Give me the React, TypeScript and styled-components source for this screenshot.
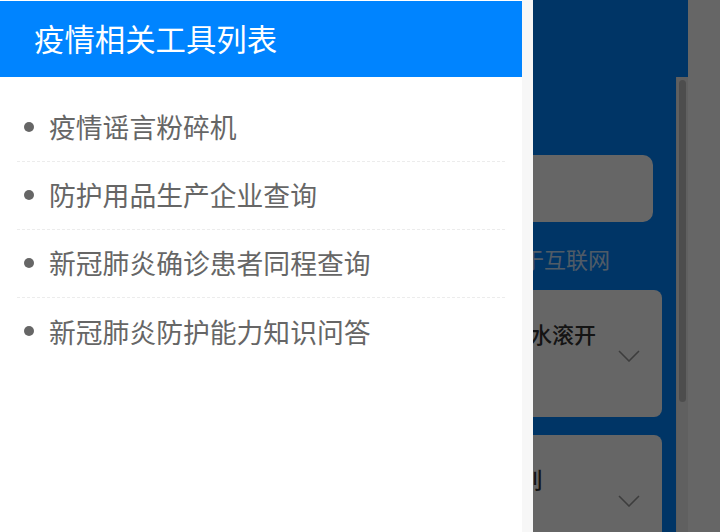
import React from 'react';
import styled, { createGlobalStyle } from 'styled-components';

const GlobalStyle = createGlobalStyle`
  html, body {
    margin: 0;
    padding: 0;
    width: 720px;
    height: 532px;
    overflow: hidden;
    background: #ffffff;
    font-family: "Noto Sans CJK SC", "Noto Sans", sans-serif;
  }
`;

const Page = styled.div`
  display: flex;
  width: 720px;
  height: 532px;
  background: #ffffff;
`;

const Main = styled.div`
  display: flex;
  flex-direction: column;
  width: 688px;
  height: 100%;
  background: #0084ff;
`;

const TopBar = styled.div`
  height: 77px;
  flex-shrink: 0;
`;

const Body = styled.div`
  display: flex;
  flex: 1;
  overflow: hidden;
`;

const Content = styled.div`
  flex: 1;
  padding: 78px 14px 0 14px;
`;

const SearchBox = styled.div`
  height: 67px;
  margin-right: 9px;
  border-radius: 10px;
  background: #ffffff;
`;

const Source = styled.div`
  margin-top: 21px;
  padding-right: 52px;
  font-size: 22px;
  line-height: 30px;
  text-align: right;
  color: rgba(255, 255, 255, 0.8);
`;

const Cards = styled.div`
  display: flex;
  flex-direction: column;
  gap: 18px;
  margin-top: 17px;
`;

const Card = styled.div`
  display: flex;
  flex-direction: column;
  height: 127px;
  box-sizing: border-box;
  padding: 30px 22px 0 32px;
  border-radius: 8px;
  background: #ffffff;
  flex-shrink: 0;
`;

const CardTitle = styled.div`
  font-size: 22px;
  font-weight: 500;
  line-height: 26px;
  color: #333333;
  white-space: nowrap;
`;

const CardFoot = styled.div`
  display: flex;
  justify-content: flex-end;
  margin-top: 4px;
  color: #999999;
`;

const ScrollTrack = styled.div`
  width: 12px;
  flex-shrink: 0;
  box-sizing: border-box;
  padding: 3px 2px 0 2px;
  background: #f1f1f1;
  border-left: 1px solid #e8e8e8;
`;

const ScrollThumb = styled.div`
  height: 322px;
  border-radius: 4px;
  background: #c1c1c1;
`;

const Overlay = styled.div`
  position: fixed;
  inset: 0;
  background: rgba(0, 0, 0, 0.6);
`;

const Drawer = styled.aside`
  position: fixed;
  top: 0;
  left: 0;
  bottom: 0;
  width: 522px;
  padding-top: 1px;
  background: #ffffff;
  border-right: 11px solid #f7f7f7;
`;

const DrawerHeader = styled.div`
  display: flex;
  align-items: center;
  height: 76px;
  box-sizing: border-box;
  padding: 0 0 3px 34px;
  background: #0084ff;
  color: #ffffff;
  font-size: 30.4px;
`;

const ToolList = styled.ul`
  list-style: none;
  margin: 0;
  padding: 17px 17px 0 17px;
`;

const ToolItem = styled.li`
  display: flex;
  align-items: center;
  height: 68px;
  box-sizing: border-box;
  padding-bottom: 2px;
  border-bottom: 1px dashed #ececec;
  color: #666666;
  font-size: 26.8px;

  &:last-child {
    border-bottom: none;
  }
`;

const Dot = styled.span`
  width: 10px;
  height: 10px;
  margin: 0 15px 0 7px;
  border-radius: 50%;
  background: #666666;
  flex-shrink: 0;
`;

const Chevron = () => (
  <svg width="22" height="12" viewBox="0 0 22 12" fill="none">
    <path d="M1 1l10 10L21 1" stroke="currentColor" strokeWidth="1.6" />
  </svg>
);

const cards = [
  '新冠病毒不耐高温，喝热水能预防吗？那只需要把水滚开',
  '喝白酒能杀死病毒吗？教你1招轻松分辨真假的区别',
];

const tools = [
  '疫情谣言粉碎机',
  '防护用品生产企业查询',
  '新冠肺炎确诊患者同程查询',
  '新冠肺炎防护能力知识问答',
];

export default function App() {
  return (
    <>
      <GlobalStyle />
      <Page>
        <Main>
          <TopBar />
          <Body>
            <Content>
              <SearchBox />
              <Source>以上信息均来源于互联网</Source>
              <Cards>
                {cards.map((title) => (
                  <Card key={title}>
                    <CardTitle>{title}</CardTitle>
                    <CardFoot>
                      <Chevron />
                    </CardFoot>
                  </Card>
                ))}
              </Cards>
            </Content>
            <ScrollTrack>
              <ScrollThumb />
            </ScrollTrack>
          </Body>
        </Main>
      </Page>
      <Overlay />
      <Drawer>
        <DrawerHeader>疫情相关工具列表</DrawerHeader>
        <ToolList>
          {tools.map((t) => (
            <ToolItem key={t}>
              <Dot />
              {t}
            </ToolItem>
          ))}
        </ToolList>
      </Drawer>
    </>
  );
}
